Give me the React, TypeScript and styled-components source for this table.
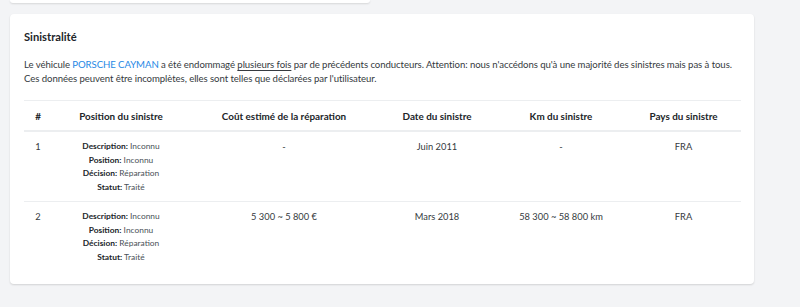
import React from "react";
import styled, { createGlobalStyle } from "styled-components";

const Global = createGlobalStyle`
  html, body { margin: 0; padding: 0; background: #f3f4f6; }
  body { font-family: Lato, "Noto Sans", sans-serif; color: #212529; }
`;

const Page = styled.div`
  width: 800px;
  height: 307px;
  overflow: hidden;
  padding: 0 10px;
  box-sizing: border-box;
`;

const TopCard = styled.div`
  width: 360px;
  height: 3px;
  background: #fff;
  border-radius: 0 0 4px 4px;
  box-shadow: 0 1px 2px rgba(0, 0, 0, 0.12);
`;

const Card = styled.section`
  margin-top: 11px;
  width: 744px;
  height: 270px;
  box-sizing: border-box;
  background: #fff;
  border-radius: 4px;
  box-shadow: 0 1px 2px rgba(0, 0, 0, 0.14);
  padding: 15px 13px 0 14px;
`;

const Title = styled.h2`
  margin: 0;
  font-size: 11.2px;
  line-height: 16px;
  font-weight: 700;
  color: #212529;
`;

const Lead = styled.p`
  margin: 13px 0 0;
  font-size: 9.6px;
  letter-spacing: -0.07px;
  line-height: 14px;
  white-space: nowrap;
  color: #353a40;
`;

const Brand = styled.span`
  color: #1e88e5;
`;

const Mark = styled.span`
  text-decoration: underline;
  text-underline-offset: 2px;
`;

const Table = styled.table`
  margin-top: 14px;
  width: 717px;
  border-collapse: collapse;
  table-layout: fixed;
`;

const Th = styled.th`
  border-top: 1px solid #eceef0;
  border-bottom: 2px solid #eceef0;
  height: 29px;
  padding: 0;
  font-size: 9.9px;
  font-weight: 700;
  text-align: center;
  color: #212529;
  vertical-align: middle;
`;

const Td = styled.td<{ $last?: boolean }>`
  border-bottom: ${(p) => (p.$last ? "none" : "1px solid #eceef0")};
  padding: 8px 0 ${(p) => (p.$last ? "0" : "7px")};
  font-size: 9.3px;
  line-height: 13.5px;
  text-align: center;
  vertical-align: top;
  color: #353a40;
`;

const Detail = styled.div`
  font-size: 8.4px;
  line-height: 13.5px;
  color: #495057;
`;

const Key = styled.b`
  font-weight: 700;
  color: #212529;
`;

const cols = [28, 138, 188, 118, 130, 115];

type Row = { n: string; cost: string; date: string; km: string; country: string };

const rows: Row[] = [
  { n: "1", cost: "-", date: "Juin 2011", km: "-", country: "FRA" },
  { n: "2", cost: "5 300 ~ 5 800 €", date: "Mars 2018", km: "58 300 ~ 58 800 km", country: "FRA" },
];

const details: [string, string][] = [
  ["Description", "Inconnu"],
  ["Position", "Inconnu"],
  ["Décision", "Réparation"],
  ["Statut", "Traité"],
];

export default function App() {
  return (
    <>
      <Global />
      <Page>
        <TopCard />
        <Card>
          <Title>Sinistralité</Title>
          <Lead>
            Le véhicule <Brand>PORSCHE CAYMAN</Brand> a été endommagé <Mark>plusieurs fois</Mark> par de
            précédents conducteurs. Attention: nous n'accédons qu'à une majorité des sinistres mais pas à tous.
            <br />
            Ces données peuvent être incomplètes, elles sont telles que déclarées par l'utilisateur.
          </Lead>
          <Table>
            <colgroup>
              {cols.map((w, i) => (
                <col key={i} style={{ width: w }} />
              ))}
            </colgroup>
            <thead>
              <tr>
                <Th>#</Th>
                <Th>Position du sinistre</Th>
                <Th>Coût estimé de la réparation</Th>
                <Th>Date du sinistre</Th>
                <Th>Km du sinistre</Th>
                <Th>Pays du sinistre</Th>
              </tr>
            </thead>
            <tbody>
              {rows.map((r, i) => {
                const last = i === rows.length - 1;
                return (
                  <tr key={r.n}>
                    <Td $last={last}>{r.n}</Td>
                    <Td $last={last}>
                      {details.map(([k, v]) => (
                        <Detail key={k}>
                          <Key>{k}:</Key> {v}
                        </Detail>
                      ))}
                    </Td>
                    <Td $last={last}>{r.cost}</Td>
                    <Td $last={last}>{r.date}</Td>
                    <Td $last={last}>{r.km}</Td>
                    <Td $last={last}>{r.country}</Td>
                  </tr>
                );
              })}
            </tbody>
          </Table>
        </Card>
      </Page>
    </>
  );
}
